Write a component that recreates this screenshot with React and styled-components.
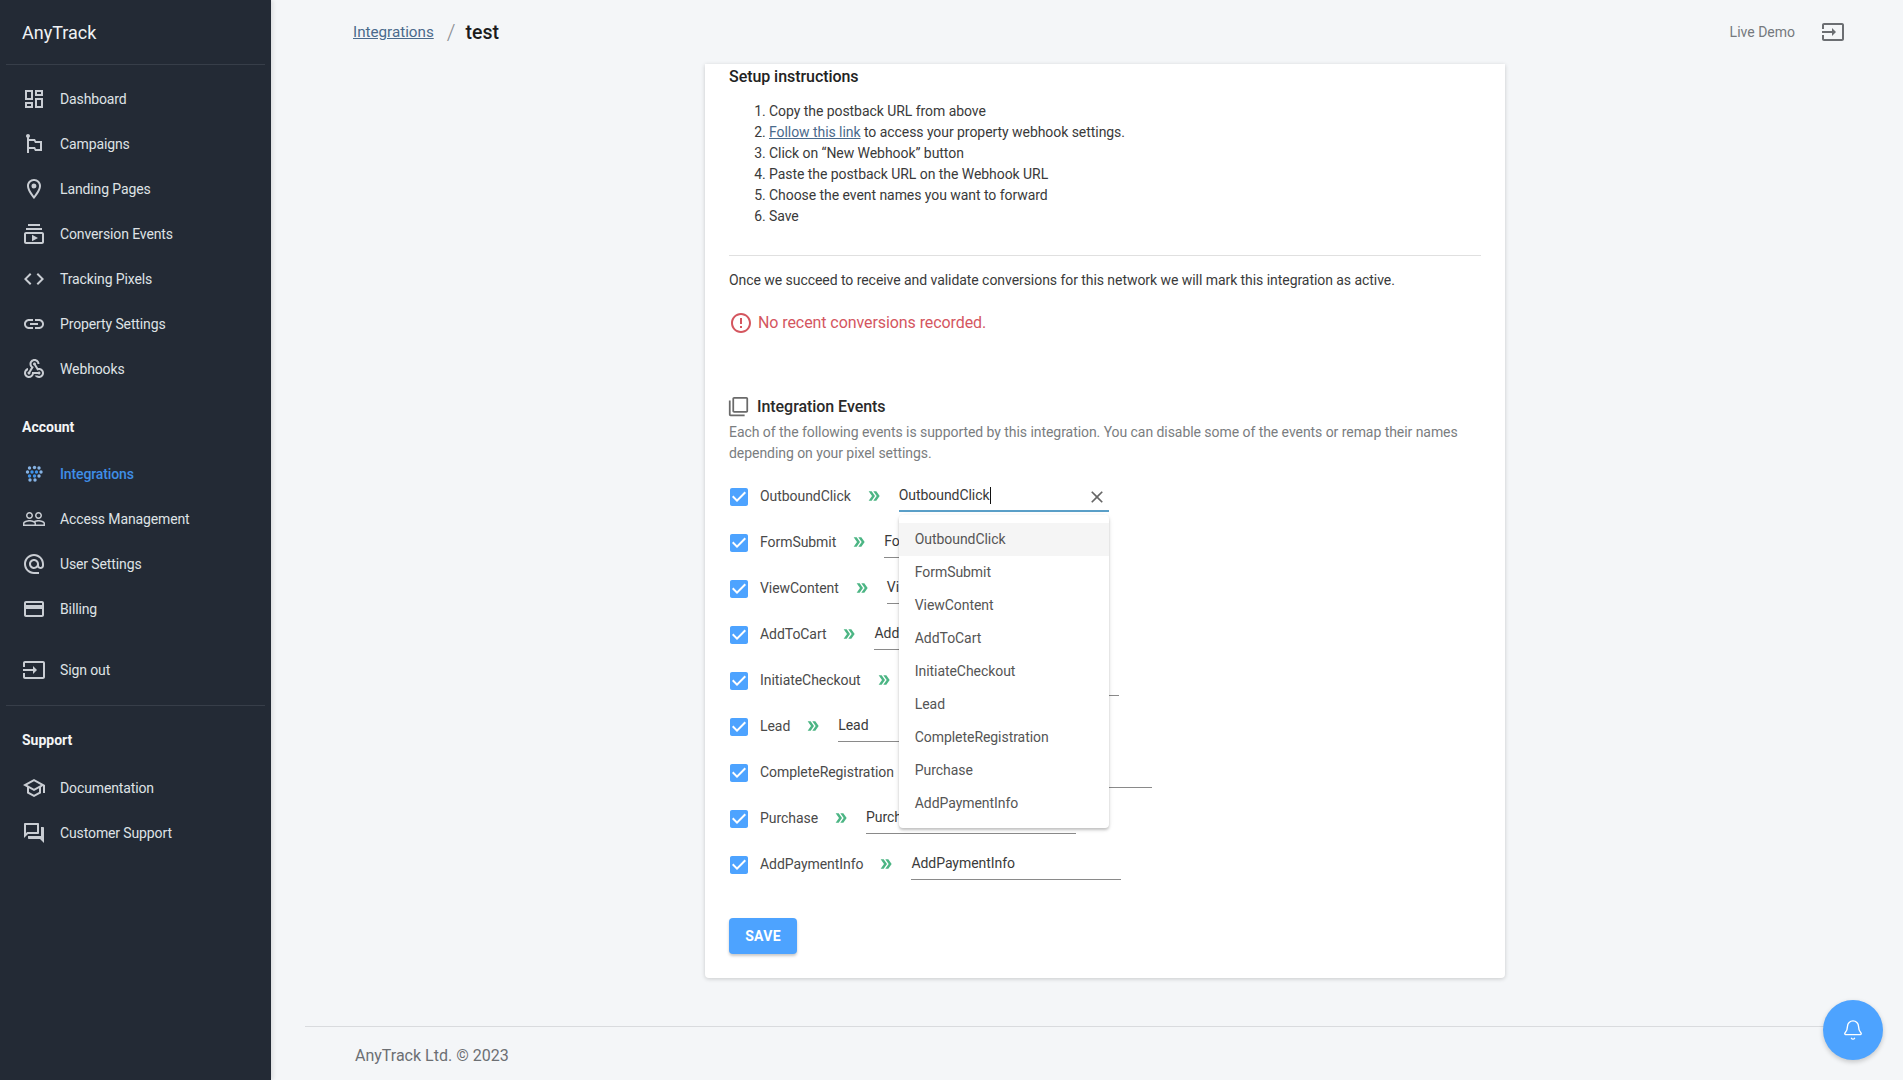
import React from 'react';
import styled, { createGlobalStyle } from 'styled-components';
import { Bell } from 'lucide-react';

const GlobalStyle = createGlobalStyle`
  html, body {
    margin: 0;
    padding: 0;
    height: 100%;
    background: #f4f6f8;
    font-family: Roboto, "Liberation Sans", sans-serif;
    font-size: 14px;
  }
`;

const paths = {
  dashboard: 'M19 5v2h-4V5h4M9 5v6H5V5h4m10 8v6h-4v-6h4M9 17v2H5v-2h4M21 3h-8v6h8V3zM11 3H3v10h8V3zm10 8h-8v10h8V11zm-10 4H3v6h8v-6z',
  flag: 'M14 9l-1-2H7V5.72c.6-.34 1-.98 1-1.72 0-1.1-.9-2-2-2s-2 .9-2 2c0 .74.4 1.38 1 1.72V21h2v-4h5l1 2h7V9h-6zm4 8h-4l-1-2H7V9h5l1 2h5v6z',
  room: 'M12 2C8.13 2 5 5.13 5 9c0 5.25 7 13 7 13s7-7.75 7-13c0-3.87-3.13-7-7-7zM7 9c0-2.76 2.24-5 5-5s5 2.24 5 5c0 2.88-2.88 7.19-5 9.88C9.92 16.21 7 11.85 7 9zm5-2.5a2.5 2.5 0 1 0 0 5 2.5 2.5 0 0 0 0-5z',
  subscriptions: 'M4 6h16v2H4zm2-4h12v2H6zm14 8H4c-1.1 0-2 .9-2 2v8c0 1.1.9 2 2 2h16c1.1 0 2-.9 2-2v-8c0-1.1-.9-2-2-2zm0 10H4v-8h16v8zm-10-7.27v6.53L16 16z',
  code: 'M9.4 16.6L4.8 12l4.6-4.6L8 6l-6 6 6 6 1.4-1.4zm5.2 0l4.6-4.6-4.6-4.6L16 6l6 6-6 6-1.4-1.4z',
  link: 'M3.9 12c0-1.71 1.39-3.1 3.1-3.1h4V7H7c-2.76 0-5 2.24-5 5s2.24 5 5 5h4v-1.9H7c-1.71 0-3.1-1.39-3.1-3.1zM8 13h8v-2H8v2zm9-6h-4v1.9h4c1.71 0 3.1 1.39 3.1 3.1s-1.39 3.1-3.1 3.1h-4V17h4c2.76 0 5-2.24 5-5s-2.24-5-5-5z',
  webhook: 'M10 15h5.88c.27-.31.67-.5 1.12-.5.83 0 1.5.67 1.5 1.5s-.67 1.5-1.5 1.5c-.44 0-.84-.19-1.12-.5H11.9c-.46 2.28-2.48 4-4.9 4-2.76 0-5-2.24-5-5 0-2.42 1.72-4.44 4-4.9v2.07c-1.16.41-2 1.53-2 2.83 0 1.65 1.35 3 3 3s3-1.35 3-3v-1zm2.5-11c1.65 0 3 1.35 3 3h2c0-2.76-2.24-5-5-5s-5 2.24-5 5c0 1.43.6 2.71 1.55 3.62l-2.35 3.9c-.68.14-1.2.75-1.2 1.48 0 .83.67 1.5 1.5 1.5s1.5-.67 1.5-1.5c0-.16-.02-.31-.07-.45l3.38-5.63C10.49 9.61 9.5 8.42 9.5 7c0-1.65 1.35-3 3-3zm4.5 9c-.64 0-1.23.2-1.72.54l-3.05-5.07C11.53 8.35 11 7.74 11 7c0-.83.67-1.5 1.5-1.5S14 6.17 14 7c0 .15-.02.29-.06.43l2.19 3.65c.28-.05.57-.08.87-.08 2.76 0 5 2.24 5 5s-2.24 5-5 5c-1.85 0-3.47-1.01-4.33-2.5h2.67c.48.32 1.05.5 1.66.5 1.65 0 3-1.35 3-3s-1.35-3-3-3z',
  error: 'M11 15h2v2h-2zm0-8h2v6h-2zm.99-5C6.47 2 2 6.48 2 12s4.47 10 9.99 10C17.52 22 22 17.52 22 12S17.52 2 11.99 2zM12 20c-4.42 0-8-3.58-8-8s3.58-8 8-8 8 3.58 8 8-3.58 8-8 8z',
  people: 'M16.5 13c-1.2 0-3.07.34-4.5 1-1.43-.67-3.3-1-4.5-1C5.33 13 1 14.08 1 16.25V19h22v-2.75c0-2.17-4.33-3.25-6.5-3.25zm-4 4.5h-10v-1.25c0-.54 2.56-1.75 5-1.75s5 1.21 5 1.75v1.25zm9 0H14v-1.25c0-.46-.2-.86-.52-1.22.88-.3 1.96-.53 3.02-.53 2.44 0 5 1.21 5 1.75v1.25zM7.5 12c1.93 0 3.5-1.57 3.5-3.5S9.43 5 7.5 5 4 6.57 4 8.5 5.57 12 7.5 12zm0-5.5c1.1 0 2 .9 2 2s-.9 2-2 2-2-.9-2-2 .9-2 2-2zm9 5.5c1.93 0 3.5-1.57 3.5-3.5S18.43 5 16.5 5 13 6.57 13 8.5s1.57 3.5 3.5 3.5zm0-5.5c1.1 0 2 .9 2 2s-.9 2-2 2-2-.9-2-2 .9-2 2-2z',
  at: 'M12 2C6.48 2 2 6.48 2 12s4.48 10 10 10h5v-2h-5c-4.34 0-8-3.66-8-8s3.66-8 8-8 8 3.66 8 8v1.43c0 .79-.71 1.57-1.5 1.57s-1.5-.78-1.5-1.57V12c0-2.76-2.24-5-5-5s-5 2.24-5 5 2.24 5 5 5c1.38 0 2.64-.56 3.54-1.47.65.89 1.77 1.47 2.96 1.47 1.97 0 3.5-1.6 3.5-3.57V12c0-5.52-4.48-10-10-10zm0 13c-1.66 0-3-1.34-3-3s1.34-3 3-3 3 1.34 3 3-1.34 3-3 3z',
  card: 'M20 4H4c-1.11 0-1.99.89-1.99 2L2 18c0 1.11.89 2 2 2h16c1.11 0 2-.89 2-2V6c0-1.11-.89-2-2-2zm0 14H4v-6h16v6zm0-10H4V6h16v2z',
  input: 'M21 3.01H3c-1.1 0-2 .9-2 2V9h2V4.99h18v14.03H3V15H1v4.01c0 1.1.9 1.98 2 1.98h18c1.1 0 2-.88 2-1.98v-14c0-1.11-.9-2-2-2zM11 16l4-4-4-4v3H1v2h10v3z',
  school: 'M12 3L1 9l4 2.18v6L12 21l7-3.82v-6l2-1.09V17h2V9L12 3zm6.82 6L12 12.72 5.18 9 12 5.28 18.82 9zM17 15.99l-5 2.73-5-2.73v-3.72L12 15l5-2.73v3.72z',
  forum: 'M15 4v7H5.17l-.59.59-.58.58V4h11m1-2H3c-.55 0-1 .45-1 1v14l4-4h10c.55 0 1-.45 1-1V3c0-.55-.45-1-1-1zm5 4h-2v9H6v2c0 .55.45 1 1 1h11l4 4V7c0-.55-.45-1-1-1z',
  copies: 'M3 5H1v16c0 1.1.9 2 2 2h16v-2H3V5zm18-4H7c-1.1 0-2 .9-2 2v14c0 1.1.9 2 2 2h14c1.1 0 2-.9 2-2V3c0-1.1-.9-2-2-2zm0 16H7V3h14v14z',
  checkbox: 'M19 3H5c-1.11 0-2 .9-2 2v14c0 1.1.89 2 2 2h14c1.11 0 2-.9 2-2V5c0-1.1-.89-2-2-2zm-9 14l-5-5 1.41-1.41L10 14.17l7.59-7.59L19 8l-9 9z',
  close: 'M19 6.41L17.59 5 12 10.59 6.41 5 5 6.41 10.59 12 5 17.59 6.41 19 12 13.41 17.59 19 19 17.59 13.41 12z',
  chevrons: 'M15.5 5H11l5 7-5 7h4.5l5-7zM8.5 5H4l5 7-5 7h4.5l5-7z',
};

const Icon = ({ name, size = 24, color = 'currentColor' }) => (
  <svg width={size} height={size} viewBox="0 0 24 24" fill={color} style={{ flexShrink: 0 }}>
    <path d={paths[name]} />
  </svg>
);

const dots = [
  [7.5, 6, 0], [12.5, 5.5, 0], [17, 6, 0],
  [5.5, 10, 0], [10, 10, 1], [14.5, 10, 1], [19, 10, 0],
  [7.5, 14, 1], [12.5, 14, 1], [17, 14, 0],
  [8, 18, 0], [13, 18, 0],
];

const DotsIcon = () => (
  <svg width="24" height="24" viewBox="0 0 24 24" style={{ flexShrink: 0 }}>
    {dots.map(([x, y, strong]) => (
      <circle key={`${x}-${y}`} cx={x} cy={y} r="1.7" fill={strong ? '#3f93ea' : '#86b3e4'} />
    ))}
  </svg>
);

const Page = styled.div`
  display: flex;
  height: 100vh;
  overflow: hidden;
`;

const Sidebar = styled.nav`
  width: 271px;
  flex-shrink: 0;
  background: #232a35;
  color: #d9dce0;
  letter-spacing: -0.12px;
  box-shadow: 2px 0 4px rgba(0, 0, 0, 0.1);
  z-index: 5;
`;

const Logo = styled.div`
  height: 65px;
  margin: 0 6px;
  padding-left: 16px;
  display: flex;
  align-items: center;
  box-sizing: border-box;
  font-size: 18px;
  font-weight: 400;
  letter-spacing: 0;
  color: #f0f2f4;
  border-bottom: 1px solid #373e49;
`;

const NavList = styled.div`
  padding-top: ${(p) => p.$top || 0}px;
`;

const NavItem = styled.div`
  height: 45px;
  padding: 0 23px 0 22px;
  display: flex;
  align-items: center;
  gap: 14px;
  margin-top: ${(p) => p.$gap || 0}px;
  color: ${(p) => (p.$active ? '#3f8ee6' : '#dfe2e5')};
  font-weight: ${(p) => (p.$active ? 500 : 400)};
  svg {
    fill: ${(p) => (p.$active ? 'none' : '#c9cdd3')};
  }
`;

const NavText = styled.span`
  flex: 1;
`;

const SectionLabel = styled.div`
  padding-left: 22px;
  line-height: 21px;
  font-weight: 700;
  color: #f4f5f6;
  letter-spacing: 0;
  margin-top: ${(p) => p.$top}px;
  margin-bottom: ${(p) => p.$bottom}px;
`;

const SideDivider = styled.div`
  margin: 13px 6px 0;
  height: 1px;
  background: #373e49;
`;

const Main = styled.div`
  flex: 1;
  min-width: 0;
  display: flex;
  flex-direction: column;
`;

const TopBar = styled.header`
  height: 64px;
  flex-shrink: 0;
  display: flex;
  align-items: center;
  padding: 0 58px 0 82px;
`;

const Crumb = styled.a`
  font-size: 15.2px;
  color: #4a6a8c;
  text-decoration: underline;
`;

const CrumbSlash = styled.span`
  margin: 0 10px 0 13px;
  font-size: 22px;
  font-weight: 300;
  color: #8b8f94;
`;

const CrumbCurrent = styled.span`
  font-size: 19.5px;
  font-weight: 500;
  color: #1c1c1c;
`;

const TopActions = styled.div`
  margin-left: auto;
  display: flex;
  align-items: center;
  gap: 26px;
  font-size: 14px;
  color: #75797e;
`;

const Content = styled.div`
  display: flex;
  justify-content: center;
  padding-left: 36px;
`;

const CardBox = styled.section`
  width: 800px;
  box-sizing: border-box;
  padding: 1px 24px 24px;
  background: #fff;
  border-radius: 0 0 4px 4px;
  box-shadow: 0 1px 4px rgba(0, 0, 0, 0.18);
  color: #333;
  letter-spacing: -0.055px;
`;

const Heading = styled.h3`
  margin: 0;
  font-size: 16px;
  font-weight: 500;
  line-height: 24px;
  color: #222;
`;

const Steps = styled.ol`
  margin: 11.5px 0 0;
  padding-left: 40px;
  line-height: 21px;
  color: #3a3a3a;
`;

const InlineLink = styled.a`
  color: #4a6a8c;
  text-decoration: underline;
`;

const Rule = styled.hr`
  margin: 28px 0 0;
  border: 0;
  height: 1px;
  background: #e0e0e0;
`;

const Para = styled.p`
  margin: 14px 0 0;
  line-height: 21px;
  color: #3a3a3a;
`;

const StatusLine = styled.div`
  margin-top: 20px;
  height: 24px;
  display: flex;
  align-items: center;
  gap: 5px;
  font-size: 16px;
  letter-spacing: -0.08px;
  color: #d4565f;
`;

const EventsHeading = styled(Heading)`
  margin-top: 60px;
  margin-left: -1px;
  display: flex;
  align-items: center;
  gap: 8px;
  color: #2a2a2a;
`;

const Hint = styled.p`
  margin: 3.5px 0 0;
  line-height: 21px;
  color: #7a7d80;
`;

const EventList = styled.div`
  margin-top: 8.5px;
`;

const EventRow = styled.div`
  height: 46px;
  display: flex;
  align-items: center;
`;

const Check = styled.span`
  display: flex;
  margin: 2px 9px 0 -2px;
`;

const EventName = styled.span`
  color: #4a4a4a;
`;

const Arrow = styled.span`
  display: flex;
  margin: 0 17px 0 15px;
`;

const Field = styled.div`
  position: relative;
  width: 210px;
  height: 30px;
  box-sizing: border-box;
  display: flex;
  align-items: center;
  padding-bottom: ${(p) => (p.$focused ? 0 : 2)}px;
  color: #3a3a3a;
  border-bottom: ${(p) => (p.$focused ? '2px solid #5a9fc8' : '1px solid #8a8a8a')};
  margin-top: 2px;
`;

const FieldValue = styled.span`
  border-right: ${(p) => (p.$focused ? '1px solid #111' : '0')};
  line-height: 17px;
`;

const ClearButton = styled.span`
  position: absolute;
  right: 2px;
  top: 5px;
  display: flex;
`;

const Dropdown = styled.ul`
  position: absolute;
  top: 33px;
  left: 0;
  width: 210px;
  margin: 0;
  padding: 8px 0;
  list-style: none;
  background: #fff;
  border-radius: 4px;
  box-shadow: 0 2px 3px rgba(0, 0, 0, 0.22), 0 1px 6px rgba(0, 0, 0, 0.06);
  z-index: 3;
`;

const Option = styled.li`
  height: 33px;
  display: flex;
  align-items: center;
  padding-left: 16px;
  color: #555;
  background: ${(p) => (p.$active ? '#f5f5f5' : 'transparent')};
`;

const SaveButton = styled.button`
  display: block;
  margin-top: 31px;
  width: 68px;
  height: 36px;
  padding: 0;
  border: 0;
  border-radius: 4px;
  background: #4da3ff;
  color: #fff;
  font-family: inherit;
  font-size: 14px;
  font-weight: 700;
  letter-spacing: 0.3px;
  box-shadow: 0 2px 3px rgba(0, 0, 0, 0.22);
`;

const Footer = styled.footer`
  margin: 48px 34px 0;
  padding: 19px 0 0 50px;
  border-top: 1px solid #d9dbde;
  font-size: 16px;
  color: #6c6f73;
`;

const Fab = styled.div`
  position: absolute;
  left: 1823px;
  top: 1000px;
  width: 60px;
  height: 60px;
  border-radius: 50%;
  background: #4da3ff;
  color: #fff;
  display: flex;
  align-items: center;
  justify-content: center;
  box-shadow: 0 2px 5px rgba(0, 0, 0, 0.2);
  z-index: 6;
`;

const primaryNav = [
  ['dashboard', 'Dashboard'],
  ['flag', 'Campaigns'],
  ['room', 'Landing Pages'],
  ['subscriptions', 'Conversion Events'],
  ['code', 'Tracking Pixels'],
  ['link', 'Property Settings'],
  ['webhook', 'Webhooks'],
];

const accountNav = [
  ['people', 'Access Management'],
  ['at', 'User Settings'],
  ['card', 'Billing'],
];

const supportNav = [
  ['school', 'Documentation'],
  ['forum', 'Customer Support'],
];

const steps = [
  'Copy the postback URL from above',
  <><InlineLink>Follow this link</InlineLink> to access your property webhook settings.</>,
  'Click on “New Webhook” button',
  'Paste the postback URL on the Webhook URL',
  'Choose the event names you want to forward',
  'Save',
];

const events = [
  'OutboundClick',
  'FormSubmit',
  'ViewContent',
  'AddToCart',
  'InitiateCheckout',
  'Lead',
  'CompleteRegistration',
  'Purchase',
  'AddPaymentInfo',
];

function App() {
  return (
    <Page>
      <GlobalStyle />
      <Sidebar>
        <Logo>AnyTrack</Logo>
        <NavList $top={11}>
          {primaryNav.map(([icon, label]) => (
            <NavItem key={label}>
              <Icon name={icon} />
              <NavText>{label}</NavText>
            </NavItem>
          ))}
        </NavList>
        <SectionLabel $top={26} $bottom={13}>Account</SectionLabel>
        <NavItem $active>
          <DotsIcon />
          <NavText>Integrations</NavText>
          <Icon name="error" color="#e0424f" />
        </NavItem>
        {accountNav.map(([icon, label]) => (
          <NavItem key={label}>
            <Icon name={icon} />
            <NavText>{label}</NavText>
          </NavItem>
        ))}
        <NavItem $gap={16}>
          <Icon name="input" />
          <NavText>Sign out</NavText>
        </NavItem>
        <SideDivider />
        <SectionLabel $top={24} $bottom={14}>Support</SectionLabel>
        {supportNav.map(([icon, label]) => (
          <NavItem key={label}>
            <Icon name={icon} />
            <NavText>{label}</NavText>
          </NavItem>
        ))}
      </Sidebar>

      <Main>
        <TopBar>
          <Crumb>Integrations</Crumb>
          <CrumbSlash>/</CrumbSlash>
          <CrumbCurrent>test</CrumbCurrent>
          <TopActions>
            Live Demo
            <Icon name="input" color="#6b6e72" />
          </TopActions>
        </TopBar>

        <Content>
          <CardBox>
            <Heading>Setup instructions</Heading>
            <Steps>
              {steps.map((step, i) => <li key={i}>{step}</li>)}
            </Steps>
            <Rule />
            <Para>Once we succeed to receive and validate conversions for this network we will mark this integration as active.</Para>
            <StatusLine>
              <Icon name="error" />
              No recent conversions recorded.
            </StatusLine>
            <EventsHeading>
              <Icon name="copies" size={21} color="#6a6a6a" />
              Integration Events
            </EventsHeading>
            <Hint>
              Each of the following events is supported by this integration. You can disable some of the events or remap their names depending on your pixel settings.
            </Hint>
            <EventList>
              {events.map((name, i) => (
                <EventRow key={name}>
                  <Check><Icon name="checkbox" color="#4da3ff" /></Check>
                  <EventName>{name}</EventName>
                  <Arrow><Icon name="chevrons" size={16} color="#4cb584" /></Arrow>
                  <Field $focused={i === 0}>
                    <FieldValue $focused={i === 0}>{name}</FieldValue>
                    {i === 0 && (
                      <>
                        <ClearButton><Icon name="close" size={20} color="#666" /></ClearButton>
                        <Dropdown>
                          {events.map((option, j) => (
                            <Option key={option} $active={j === 0}>{option}</Option>
                          ))}
                        </Dropdown>
                      </>
                    )}
                  </Field>
                </EventRow>
              ))}
            </EventList>
            <SaveButton>SAVE</SaveButton>
          </CardBox>
        </Content>

        <Footer>AnyTrack Ltd. © 2023</Footer>
      </Main>

      <Fab><Bell size={22} strokeWidth={1.5} /></Fab>
    </Page>
  );
}

export default App;
